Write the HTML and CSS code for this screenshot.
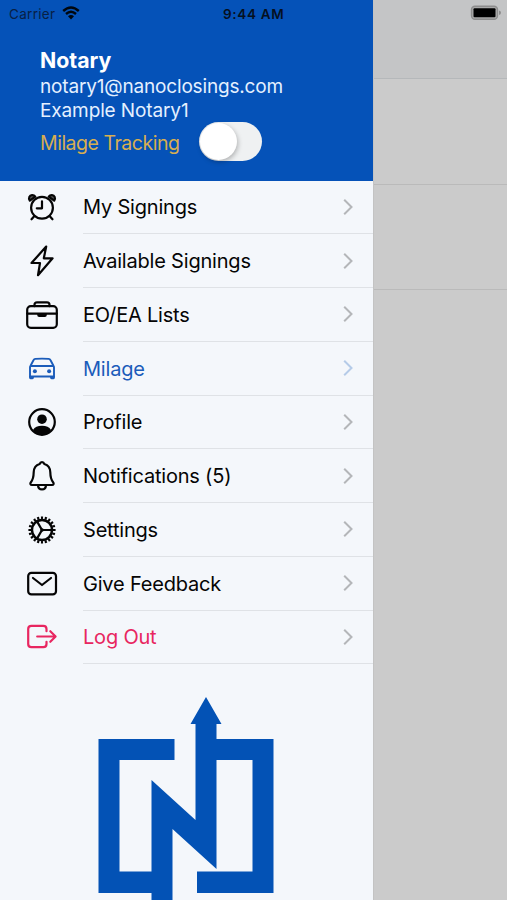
FILE: index.html
```html
<!DOCTYPE html>
<html lang="en">
<head>
<meta charset="utf-8">
<title>Notary menu</title>
<link rel="stylesheet" href="styles.css">
</head>
<body>
<div class="screen">
  <div class="status">
    <span class="carrier">Carrier</span>
    <svg class="wifi" viewBox="0 0 18 14"><path d="M1.2 5Q9-2 16.8 5M4 8Q9 3.6 14 8" fill="none" stroke="currentColor" stroke-width="2.4"/><path d="M6 10.3Q9 7.6 12 10.3L9 13.5Z" fill="currentColor"/></svg>
    <span class="time">9:44 AM</span>
    <svg class="battery" viewBox="0 0 32 16"><rect x="1.5" y="1.2" width="26" height="13" rx="3.5" fill="#aaa" stroke="#8d8d8d" stroke-width="1.4"/><rect x="3.5" y="3.2" width="22" height="9" rx="1" fill="#000"/><path d="M29 5.5Q31 6 31 7.7T29 10Z" fill="#8d8d8d"/></svg>
  </div>
  <aside class="drawer">
    <header class="header">
      <h1 class="name">Notary</h1>
      <div class="email"><span>notary1@nanoclosings.com</span></div>
      <div class="user"><span>Example Notary1</span></div>
      <div class="tracking"><span class="track-label">Milage Tracking</span><span class="toggle"><span class="knob"></span></span></div>
    </header>
    <nav class="menu">
      <a class="row"><svg class="icon" viewBox="0 0 34 34"><circle cx="17" cy="17.8" r="10.9"/><path d="M17 11.3V18.3H11.8M9 26.5L6.5 29.3M25 26.5L27.5 29.3"/><path class="solid-line" d="M4.8 10.6C3 7.8 4.6 5.3 7 5.1C8.6 5 9.7 5.8 10.3 6.6ZM29.2 10.6C31 7.8 29.4 5.3 27 5.1C25.4 5 24.3 5.8 23.7 6.6Z"/></svg><span class="cell"><span class="label">My Signings</span><svg class="chev" viewBox="0 0 10 18"><path d="M1.2 1.7L8.5 9L1.2 16.3"/></svg></span></a>
      <a class="row"><svg class="icon" viewBox="0 0 34 34"><path d="M21.2 2.6L6.5 19H15L13 31.2L27.6 14.3H18.8Z"/></svg><span class="cell"><span class="label">Available Signings</span><svg class="chev" viewBox="0 0 10 18"><path d="M1.2 1.7L8.5 9L1.2 16.3"/></svg></span></a>
      <a class="row"><svg class="icon" viewBox="0 0 34 34"><rect x="2.2" y="8.2" width="29.6" height="21.6" rx="3.6"/><path d="M9.5 8.2V6.8Q9.5 4.4 12 4.4H22Q24.5 4.4 24.5 6.8V8.2M2.2 15.6H31.8"/><path d="M12.2 15.6H21.8V17Q21.8 19 19.8 19H14.2Q12.2 19 12.2 17Z" fill="currentColor" stroke="none"/></svg><span class="cell"><span class="label">EO/EA Lists</span><svg class="chev" viewBox="0 0 10 18"><path d="M1.2 1.7L8.5 9L1.2 16.3"/></svg></span></a>
      <a class="row active"><svg class="icon" viewBox="0 0 34 34"><path d="M5.4 14L8.6 8Q9.1 7 10.3 6.900Q17 6.300 23.7 6.900Q24.9 7 25.4 8L28.6 14Q29 14.700 29 15.500V24.500H5V15.500Q5 14.700 5.4 14ZM5.400 14H28.600" stroke-width="1.9"/><path d="M4.100 24H8.900V25.800Q8.900 27.200 7.500 27.200H5.500Q4.100 27.200 4.100 25.800ZM25.100 24H29.900V25.800Q29.900 27.200 28.500 27.200H26.500Q25.100 27.200 25.100 25.800Z" fill="currentColor" stroke="none"/><circle cx="9.900" cy="19.200" r="2" fill="currentColor" stroke="none"/><circle cx="24.100" cy="19.200" r="2" fill="currentColor" stroke="none"/></svg><span class="cell"><span class="label">Milage</span><svg class="chev" viewBox="0 0 10 18"><path d="M1.2 1.7L8.5 9L1.2 16.3"/></svg></span></a>
      <a class="row"><svg class="icon" viewBox="0 0 34 34"><circle cx="17" cy="17" r="12.8"/><circle cx="17" cy="14.2" r="4.8" fill="currentColor" stroke="none"/><path d="M8 25Q10.5 20.8 17 20.8T26 25Q22.5 30 17 30T8 25Z" fill="currentColor" stroke="none"/></svg><span class="cell"><span class="label">Profile</span><svg class="chev" viewBox="0 0 10 18"><path d="M1.2 1.7L8.5 9L1.2 16.3"/></svg></span></a>
      <a class="row"><svg class="icon" viewBox="0 0 34 34"><path d="M17 3.2C15.8 3.2 15 3.9 14.7 5C10.8 6.1 8.8 9.2 8.7 13.3C8.6 19.3 7.6 21.2 5.9 23.2C4.8 24.5 5.4 26 7 26H27C28.6 26 29.2 24.5 28.1 23.2C26.4 21.2 25.4 19.3 25.3 13.3C25.2 9.2 23.2 6.1 19.3 5C19 3.9 18.2 3.2 17 3.2ZM13 26.3Q13.3 30.4 17 30.4T21 26.3"/></svg><span class="cell"><span class="label">Notifications (5)</span><svg class="chev" viewBox="0 0 10 18"><path d="M1.2 1.7L8.5 9L1.2 16.3"/></svg></span></a>
      <a class="row"><svg class="icon" viewBox="0 0 34 34"><circle cx="17" cy="17" r="10" stroke-width="2.4"/><circle cx="17" cy="17" r="12.2" pathLength="40" stroke-dasharray="1.1 .9" stroke-dashoffset=".55" stroke-width="2.8" stroke-linecap="butt"/><circle cx="17" cy="17" r="1.8" fill="currentColor" stroke="none"/><path d="M17 17H27M17 17L12 8.4M17 17L12 25.6"/></svg><span class="cell"><span class="label">Settings</span><svg class="chev" viewBox="0 0 10 18"><path d="M1.2 1.7L8.5 9L1.2 16.3"/></svg></span></a>
      <a class="row"><svg class="icon" viewBox="0 0 34 34"><rect x="3.2" y="5.8" width="27.8" height="21.6" rx="3.2"/><path d="M8 11L17 18L26 11"/></svg><span class="cell"><span class="label">Give Feedback</span><svg class="chev" viewBox="0 0 10 18"><path d="M1.2 1.7L8.5 9L1.2 16.3"/></svg></span></a>
      <a class="row logout"><svg class="icon" viewBox="0 0 34 34"><path d="M21.5 11.2V9Q21.5 5.8 18.3 5.8H6.4Q3.2 5.8 3.2 9V24Q3.2 27.2 6.4 27.2H18.3Q21.5 27.2 21.5 24V21.8M12.2 16.5H30.5M25.3 11.2L30.6 16.5L25.3 21.8"/></svg><span class="cell"><span class="label">Log Out</span><svg class="chev" viewBox="0 0 10 18"><path d="M1.2 1.7L8.5 9L1.2 16.3"/></svg></span></a>
    </nav>
    <svg class="logo" viewBox="0 0 176 210"><path d="M108 0L123.500 27H118.500V42H175.500V196H99V174.500H154.500V63H118.500V172L74.500 132V210H53.500V196H0.500V42H76.500V63H21.500V174.500H53.500V83L97.500 123V27H92.500Z" fill="#0352b5"/></svg>
  </aside>
  <main class="behind"><div class="bar"></div><div class="item"></div><div class="item"></div></main>
</div>
</body>
</html>
```
FILE: styles.css
```css
* { box-sizing: border-box; }
body { margin: 0; font-family: Inter, "Liberation Sans", sans-serif; background: #cbcbcb; }
.screen { position: relative; display: flex; width: 507px; height: 900px; overflow: hidden; }
.status { position: absolute; inset: 0 0 auto; z-index: 1; display: flex; align-items: center; height: 28px; padding-left: 9px; color: #05101f; }
.carrier { width: 53px; font-size: 13.5px; letter-spacing: .3px; color: #082045; }
.wifi { width: 18px; height: 14px; margin-top: -2px; color: #00070f; }
.time { margin-left: 143px; width: 70px; font-size: 13.5px; font-weight: 600; letter-spacing: .75px; white-space: nowrap; }
.time { letter-spacing: .7px; }
.battery { width: 32px; height: 16px; margin: -2px 5px 0 auto; }
.drawer { flex: none; width: 372.500px; height: 900px; background: #f4f7fb; overflow: hidden; }
.header { height: 180.500px; padding: 47px 0 0 40px; background: #0552b8; color: #fff; }
.name { margin: 0; height: 26px; font-size: 21.300px; line-height: 26px; font-weight: 700; }
.email, .user { height: 25px; font-size: 19px; line-height: 27px; color: #e4f0ff; white-space: nowrap; }
.email { letter-spacing: -.17px; }
.user { height: 23px; line-height: 25px; letter-spacing: -.12px; }
.tracking { display: flex; align-items: center; height: 40px; }
.track-label { width: 158.500px; padding-top: 3px; font-size: 19.500px; color: #d7ae51; letter-spacing: -.48px; white-space: nowrap; }
.toggle { width: 63px; height: 39px; padding: 1px; border-radius: 20px; background: #eff1f2; }
.knob { display: block; width: 37px; height: 37px; border-radius: 50%; background: #fff; box-shadow: 1px 2px 5px #0004; }
.row { display: flex; align-items: center; height: 53.750px; padding-left: 25px; color: #050505; }
.icon { flex: none; width: 34px; height: 34px; margin-right: 24px; fill: none; stroke: currentColor; stroke-width: 2.200; stroke-linecap: round; stroke-linejoin: round; }
.solid-line { fill: #555; }
.cell { flex: 1; display: flex; align-items: center; justify-content: space-between; height: 100%; padding-right: 20px; border-bottom: 1px solid #dfe2e6; }
.label { padding-top: 1px; font-size: 20px; letter-spacing: -.2px; white-space: nowrap; }
.chev { width: 10px; height: 18px; fill: none; stroke: #b4b6b9; stroke-width: 2; }
.active { color: #1b5cba; }
.active .chev { stroke: #b5cbe8; }
.logout { color: #e82660; }
.logo { display: block; width: 176px; height: 210px; margin: 33px 0 0 98px; }
.behind { flex: 1; background: #cbcbcb; border-left: 1px solid #c3c3c3; }
.bar { height: 79px; background: #c4c5c6; border-bottom: 1px solid #b5b8ba; }
.item { height: 105.500px; border-bottom: 1px solid #bababa; }
```
